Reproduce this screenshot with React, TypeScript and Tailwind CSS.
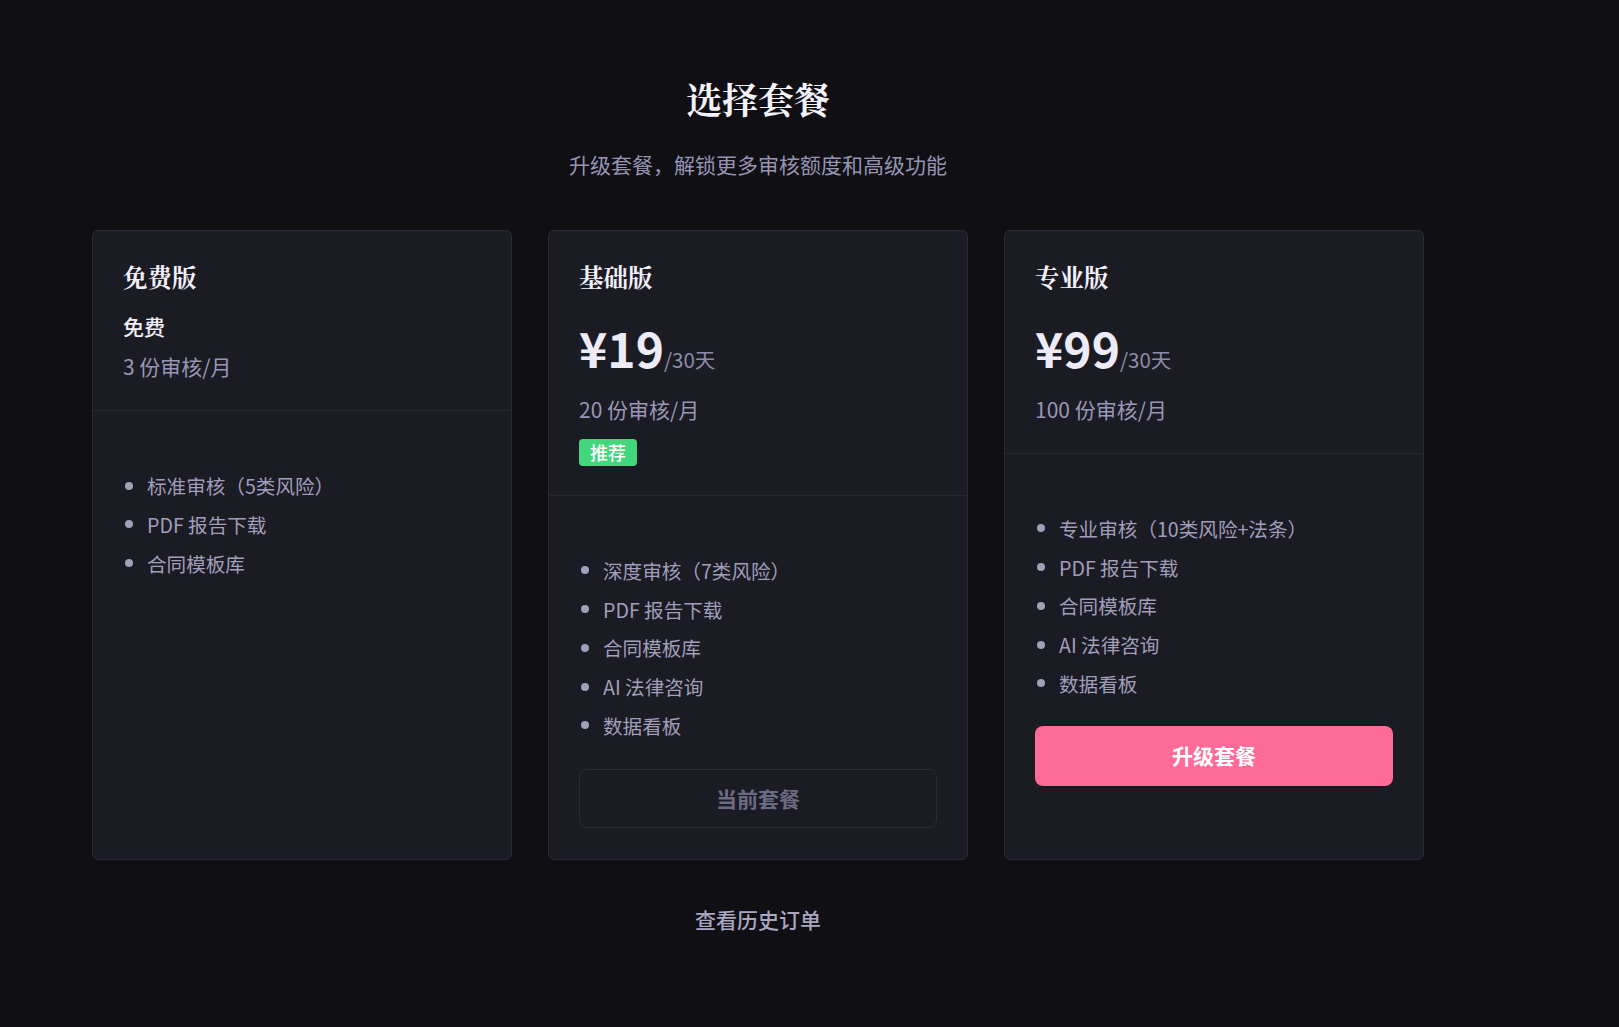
import React from 'react';

type Plan = {
  name: string;
  price?: string;
  freeLabel?: string;
  quota: string;
  badge?: string;
  features: string[];
  action?: 'current' | 'upgrade';
};

const plans: Plan[] = [
  {
    name: '免费版',
    freeLabel: '免费',
    quota: '3 份审核/月',
    features: ['标准审核（5类风险）', 'PDF 报告下载', '合同模板库'],
  },
  {
    name: '基础版',
    price: '¥19',
    quota: '20 份审核/月',
    badge: '推荐',
    features: ['深度审核（7类风险）', 'PDF 报告下载', '合同模板库', 'AI 法律咨询', '数据看板'],
    action: 'current',
  },
  {
    name: '专业版',
    price: '¥99',
    quota: '100 份审核/月',
    features: ['专业审核（10类风险+法条）', 'PDF 报告下载', '合同模板库', 'AI 法律咨询', '数据看板'],
    action: 'upgrade',
  },
];

const sans = "font-['Noto_Sans_CJK_SC','Noto_Sans',sans-serif]";
const serif = "font-['Noto_Serif_CJK_SC','Liberation_Serif',serif]";

function PlanCard({ plan }: { plan: Plan }) {
  return (
    <div className="flex flex-col rounded-[6px] border border-[#2a2a37] bg-[#1b1b24]">
      <div className="border-b border-[#272733] px-[30px] pt-[28px] pb-[29px]">
        <h3 className={`${serif} text-[24.5px] leading-[36px] font-bold text-[#f1eff8]`}>{plan.name}</h3>

        {plan.freeLabel && (
          <>
            <div className="mt-[16px] text-[21px] leading-[30px] font-medium text-[#f1eff8]">{plan.freeLabel}</div>
            <div className="mt-[10px] text-[21px] leading-[30px] text-[#9a97b4]">{plan.quota}</div>
          </>
        )}

        {plan.price && (
          <>
            <div className="mt-[28px] flex items-baseline">
              <span className="text-[48px] leading-[48px] font-bold text-[#eeebf8]">{plan.price}</span>
              <span className="text-[20.5px] text-[#8f8ca9]">/30天</span>
            </div>
            <div className="mt-[19px] text-[21px] leading-[30px] text-[#9a97b4]">{plan.quota}</div>
          </>
        )}

        {plan.badge && (
          <span className="mt-[15px] inline-flex h-[27px] items-center rounded-[4px] bg-[#44d67c] px-[11px] text-[18px] font-medium text-white">
            {plan.badge}
          </span>
        )}
      </div>

      <div className="flex flex-1 flex-col px-[30px] pt-[60px] pb-[31px]">
        <ul className="flex flex-col gap-[9.8px]">
          {plan.features.map((f) => (
            <li key={f} className="flex items-center gap-[14px] pl-[2px] text-[19.6px] leading-[29px] text-[#a19eba]">
              <span className="h-[8px] w-[8px] shrink-0 rounded-full bg-[#a29fb8]" />
              {f}
            </li>
          ))}
        </ul>

        {plan.action === 'current' && (
          <button className="mt-[29px] h-[59px] w-full rounded-[8px] border border-[#2a2a38] text-[21px] font-semibold text-[#6d6a84]">
            当前套餐
          </button>
        )}
        {plan.action === 'upgrade' && (
          <button className="mt-[28px] h-[60px] w-full rounded-[8px] bg-[#ff6b99] text-[21px] font-bold text-white">
            升级套餐
          </button>
        )}
      </div>
    </div>
  );
}

export default function App() {
  return (
    <div className={`${sans} min-h-screen bg-[#0f0f14]`}>
      <div className="ml-[92px] w-[1332px] pt-[72px] pb-[60px]">
        <h1 className={`${serif} text-center text-[36px] leading-[54px] font-bold text-[#f3f1fa]`}>选择套餐</h1>
        <p className="mt-[22px] text-center text-[21px] leading-[32px] text-[#9794b3]">
          升级套餐，解锁更多审核额度和高级功能
        </p>

        <div className="mt-[50px] grid grid-cols-3 gap-[36px]">
          {plans.map((p) => (
            <PlanCard key={p.name} plan={p} />
          ))}
        </div>

        <div className="mt-[44px] text-center">
          <button className="text-[21px] leading-[30px] font-medium text-[#a9a6c2]">查看历史订单</button>
        </div>
      </div>
    </div>
  );
}
